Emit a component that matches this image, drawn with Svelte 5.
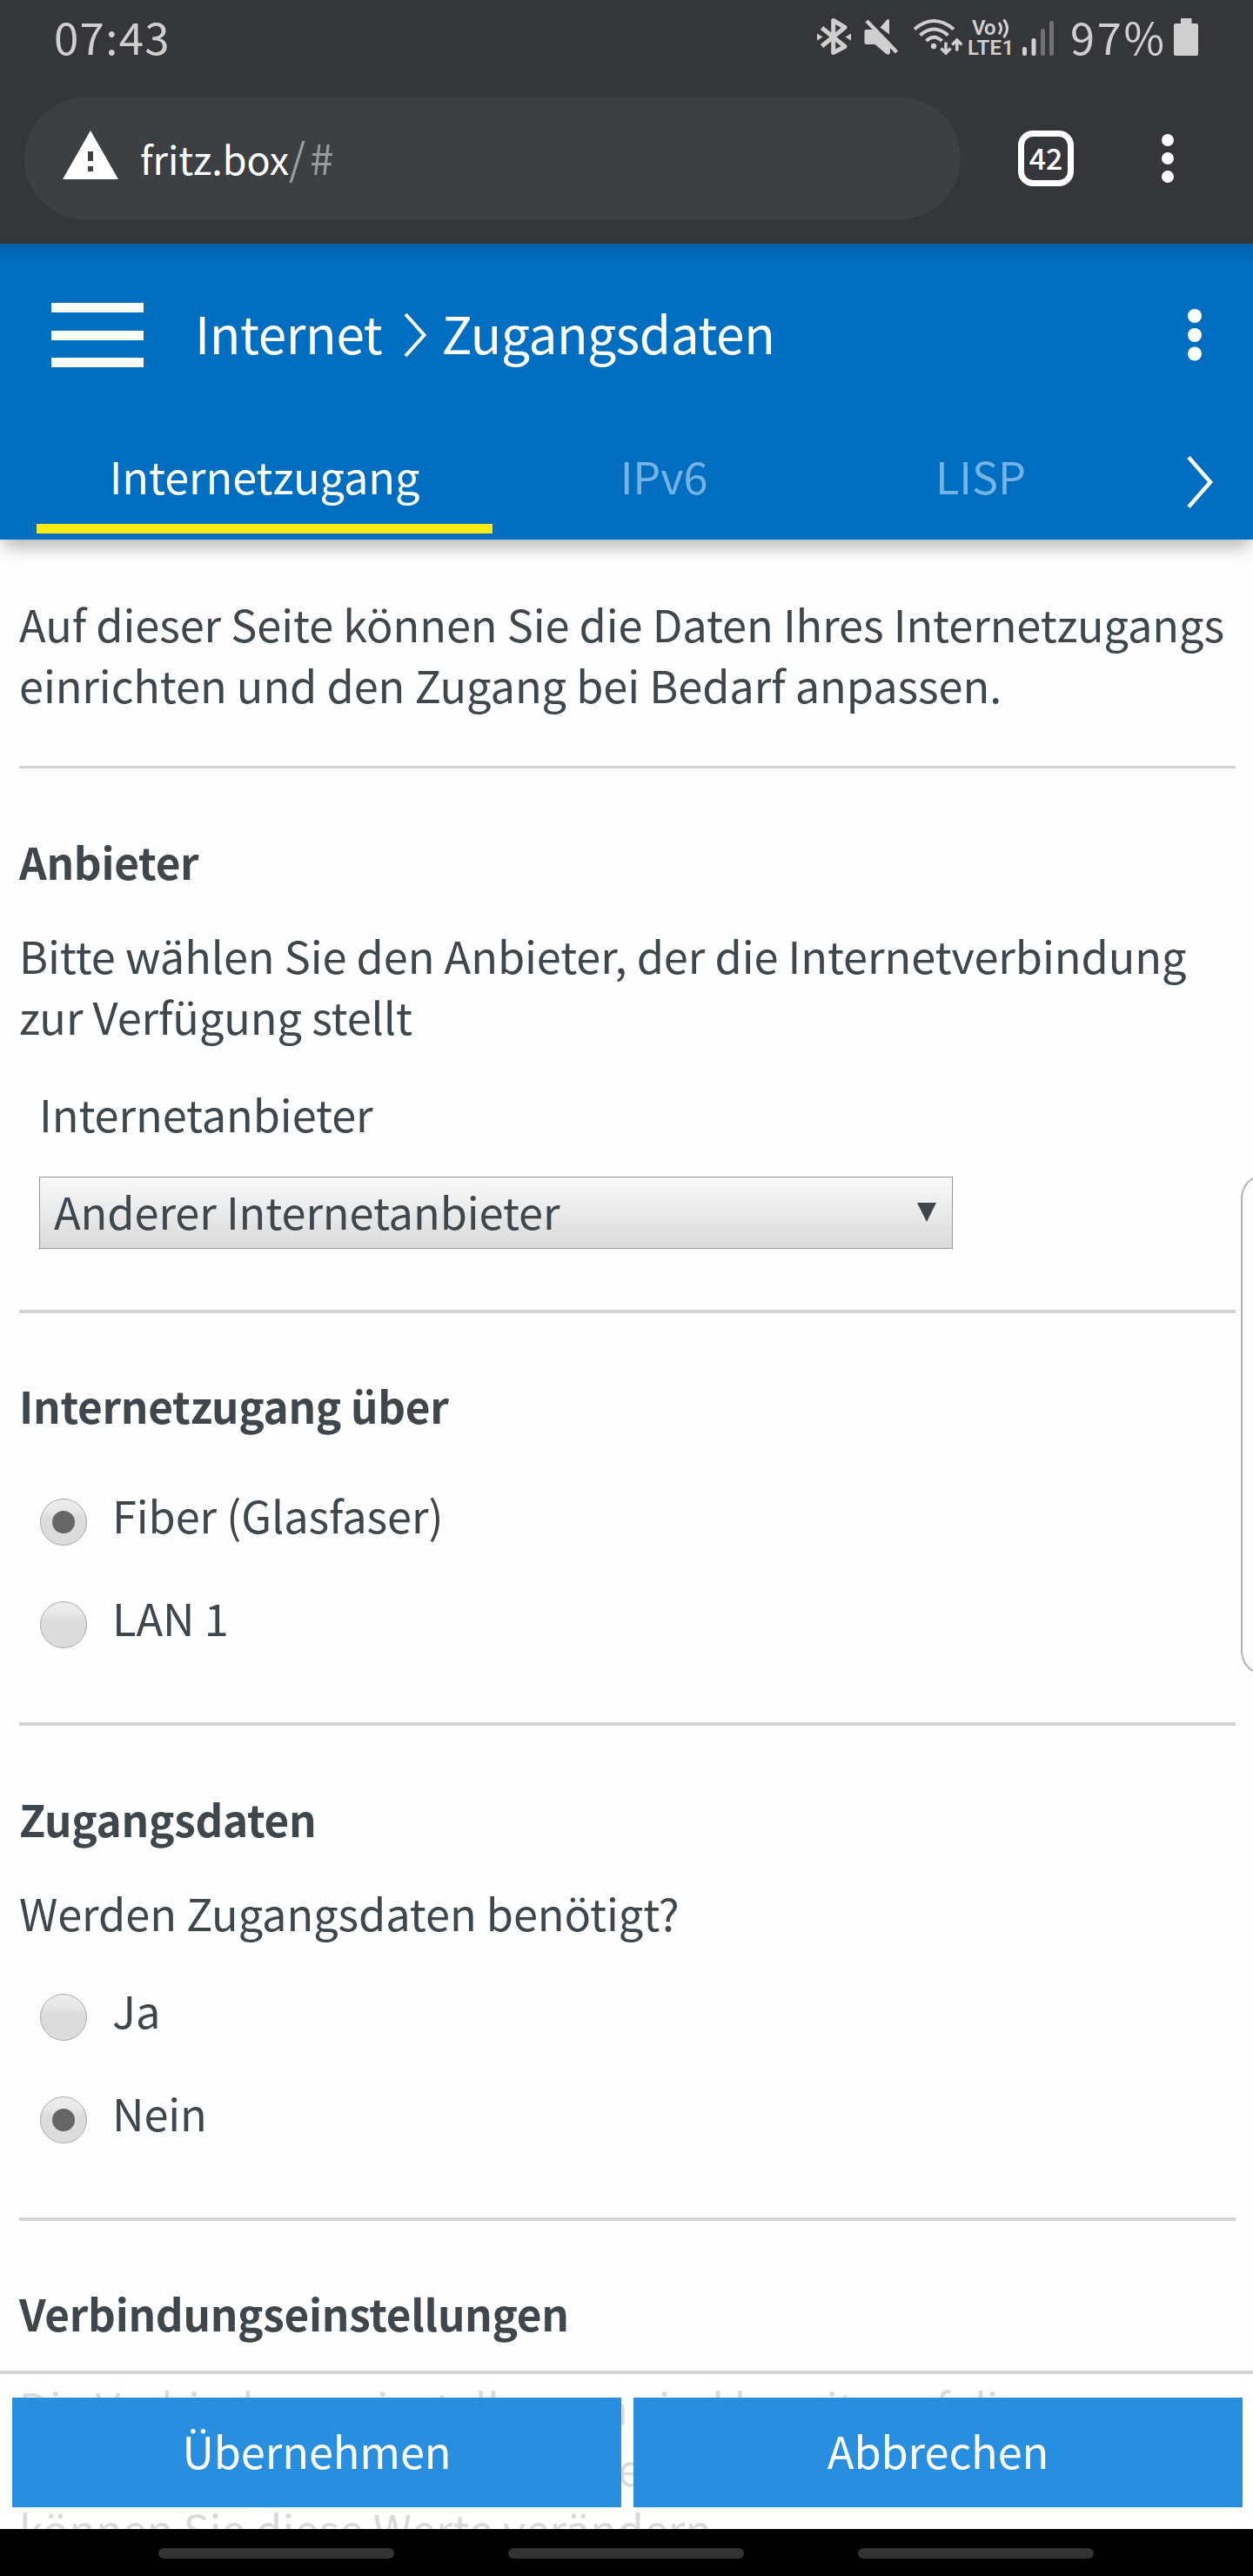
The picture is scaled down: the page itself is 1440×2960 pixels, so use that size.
<script lang="ts">
  let provider = $state('Anderer Internetanbieter')
  let access = $state('Fiber (Glasfaser)')
  let credentials = $state('Nein')
  let activeTab = $state('Internetzugang')

  const tabs = ['Internetzugang', 'IPv6', 'LISP']
  const accessTypes = ['Fiber (Glasfaser)', 'LAN 1']
  const answers = ['Ja', 'Nein']
</script>

{#snippet radio(label: string, checked: boolean, select: () => void)}
  <button class="radio" role="radio" aria-checked={checked} onclick={select}>
    <span class="circle" class:checked></span>
    <span>{label}</span>
  </button>
{/snippet}

<div class="screen">
  <div class="status-bar">
    <span class="time">07:43</span>
    <svg class="status-icons" viewBox="930 0 450 98" width="450" height="98">
      <path d="M944.500 32 L971 53.500 L957.700 60.500 V23.500 L971 31.500 L944.500 53" fill="none" stroke="#cfcfcf" stroke-width="5" stroke-linejoin="round" />
      <g fill="#cfcfcf">
        <path d="M939 38.500 L945.500 42.500 L939 46.500 Z M978 38.500 L971.500 42.500 L978 46.500 Z" />
        <path d="M993.500 36 Q993.500 34 995.500 34 H1003 L1023 54 V60.500 Q1022 64 1018.500 62 L1005.500 51 H996 Q993.500 51 993.500 48.500 Z" />
        <path d="M1011.500 31.500 L1019 23 Q1022 20.500 1022 24 V39.500 Z" />
      </g>
      <path d="M996 24 L1030.500 60" stroke="#cfcfcf" stroke-width="4.500" />
      <g fill="none" stroke="#cfcfcf" stroke-width="4">
        <path d="M1051 33.500 Q1073 14.500 1096 33.500" />
        <path d="M1057.500 40.500 Q1073 26.500 1089.500 40.500" />
        <path d="M1064.500 47 Q1073 38.500 1082.500 47" />
        <path d="M1087 48.500 V61 M1081.500 55.500 L1087 61 L1092.500 55.500" stroke-width="3.500" />
        <path d="M1099.800 58.500 V46 M1094.300 51.500 L1099.800 46 L1105.300 51.500" stroke-width="3.500" />
        <path d="M1148 26 Q1153 32.500 1148 39.500" stroke-width="3" />
        <path d="M1153.500 22.500 Q1161.500 32.500 1153.500 43" stroke-width="3" />
      </g>
      <circle cx="1073" cy="53" r="3.200" fill="#cfcfcf" />
      <text x="1117" y="39.500" class="net" textLength="27.500">Vo</text>
      <text x="1112" y="63" class="net" textLength="53">LTE1</text>
      <rect x="1175" y="54" width="5" height="10" rx="2" fill="#cfcfcf" />
      <rect x="1185.500" y="44" width="5" height="20" rx="2" fill="#cfcfcf" />
      <rect x="1196" y="33" width="5" height="31" rx="2" fill="#707174" />
      <rect x="1206" y="24" width="5" height="40" rx="2" fill="#707174" />
      <text x="1230" y="63" class="percent" textLength="108">97%</text>
      <path d="M1357 21 H1369.500 V27 H1375 Q1377 27 1377 29 V62 Q1377 64 1375 64 H1351 Q1349 64 1349 62 V29 Q1349 27 1351 27 H1357 Z" fill="#cfcfcf" />
    </svg>
  </div>

  <div class="toolbar">
    <div class="address">
      <svg width="64" height="56" viewBox="0 0 64 56">
        <path d="M32 0 L64 56 H0 Z" fill="#fff" />
        <path d="M29 24 h6 v11 h-6 Z M29 41 h6 v6 h-6 Z" fill="#3c4043" />
      </svg>
      <span class="url">fritz.box<span class="path">/#</span></span>
    </div>
    <div class="tab-count">42</div>
    <svg class="more" width="14" height="58" viewBox="0 0 14 58" fill="#fff">
      <circle cx="7" cy="8" r="7" />
      <circle cx="7" cy="29" r="7" />
      <circle cx="7" cy="50" r="7" />
    </svg>
  </div>

  <header>
    <div class="title-row">
      <div class="hamburger"><i></i><i></i><i></i></div>
      <div class="title">
        <span>Internet</span>
        <svg width="27" height="52" viewBox="0 0 27 52">
          <path d="M2 2 L23.500 26 L2 50" fill="none" stroke="#fff" stroke-width="4" />
        </svg>
        <span class="page">Zugangsdaten</span>
      </div>
      <svg class="menu" width="18" height="62" viewBox="0 0 18 62" fill="#fff">
        <circle cx="9" cy="9" r="8" />
        <circle cx="9" cy="31" r="8" />
        <circle cx="9" cy="52.500" r="8" />
      </svg>
    </div>
    <nav>
      {#each tabs as tab}
        <button class="tab" class:active={tab === activeTab} onclick={() => (activeTab = tab)}>{tab}</button>
      {/each}
      <svg class="next" width="30" height="60" viewBox="0 0 30 60">
        <path d="M2 1.500 L27 30 L2 58.500" fill="none" stroke="#fff" stroke-width="4.500" />
      </svg>
    </nav>
  </header>

  <main>
    <p>Auf dieser Seite können Sie die Daten Ihres Internetzugangs<br />einrichten und den Zugang bei Bedarf anpassen.</p>

    <section class="thin">
      <h2>Anbieter</h2>
      <p>Bitte wählen Sie den Anbieter, der die Internetverbindung<br />zur Verfügung stellt</p>
      <div class="field">
        <span>Internetanbieter</span>
        <div class="select">
          <span>{provider}</span>
          <svg width="22" height="22" viewBox="0 0 22 22"><path d="M0 0 H22 L11 22 Z" fill="#3f464c" /></svg>
        </div>
      </div>
    </section>

    <section>
      <h2>Internetzugang über</h2>
      <div class="radios wide" role="radiogroup">
        {#each accessTypes as type}
          {@render radio(type, type === access, () => (access = type))}
        {/each}
      </div>
    </section>

    <section class="credentials">
      <h2>Zugangsdaten</h2>
      <p>Werden Zugangsdaten benötigt?</p>
      <div class="radios" role="radiogroup">
        {#each answers as answer}
          {@render radio(answer, answer === credentials, () => (credentials = answer))}
        {/each}
      </div>
    </section>

    <section>
      <h2>Verbindungseinstellungen</h2>
      <p>Die Verbindungseinstellungen sind bereits auf die am<br />häufigsten verwendeten Werte eingestellt. Bei Bedarf<br />können Sie diese Werte verändern.</p>
    </section>

    <div class="side-handle"></div>
    <div class="actions">
      <button>Übernehmen</button>
      <button>Abbrechen</button>
    </div>
  </main>

  <div class="nav-bar"><i></i><i></i><i></i></div>
</div>

<style>
  :global(body) {
    margin: 0;
    background: #fefefe;
  }

  .screen {
    display: flex;
    flex-direction: column;
    width: 1440px;
    height: 2960px;
    overflow: hidden;
    font-family: 'Noto Sans CJK SC', 'Open Sans', sans-serif;
    font-size: 50.5px;
    line-height: 70px;
    color: #3f464c;
    letter-spacing: -0.1px;
    background: #fefefe;
  }

  button {
    padding: 0;
    font: inherit;
    color: inherit;
    letter-spacing: inherit;
    background: none;
    border: 0;
  }

  .status-bar {
    display: flex;
    flex: none;
    justify-content: space-between;
    height: 98px;
    padding: 0 60px 0 62px;
    color: #cfcfcf;
    background: #35363a;
  }

  .time {
    padding-top: 6px;
    font-size: 51px;
    letter-spacing: 1.3px;
  }

  .net {
    font: 600 24px Roboto, sans-serif;
    fill: #cfcfcf;
  }

  .percent {
    font-size: 50.5px;
    fill: #cfcfcf;
  }

  .toolbar {
    display: flex;
    flex: none;
    align-items: center;
    box-sizing: border-box;
    height: 182px;
    padding: 0 91px 14px 28px;
    background: #35363a;
  }

  .toolbar > * {
    box-sizing: border-box;
  }

  .address {
    display: flex;
    gap: 25px;
    align-items: center;
    width: 1076px;
    height: 140px;
    padding: 0 0 8px 44px;
    color: #fff;
    background: #3c4043;
    border-radius: 70px;
  }

  .url {
    padding-top: 5px;
    font-size: 45px;
  }

  .path {
    font-size: 49px;
    color: #9a9c9e;
    letter-spacing: 5px;
  }

  .tab-count {
    width: 64px;
    height: 64px;
    margin-left: 66px;
    font-size: 34px;
    font-weight: 500;
    line-height: 47px;
    color: #fff;
    text-align: center;
    border: 7px solid #fff;
    border-radius: 17px;
  }

  .more {
    margin-left: auto;
  }

  header {
    position: relative;
    z-index: 1;
    display: flex;
    flex: none;
    flex-direction: column;
    height: 340px;
    color: #fff;
    background: linear-gradient(#0561a8, #0069b8 12px, #006ec0 28px);
    box-shadow: 0 12px 20px -4px rgba(0, 0, 0, 0.3);
  }

  .title-row {
    display: flex;
    align-items: center;
    height: 210px;
    padding: 0 58px 0 59px;
  }

  .hamburger {
    display: flex;
    flex-direction: column;
    gap: 20.5px;
    width: 106px;
  }

  .hamburger i {
    height: 11px;
    background: #fff;
  }

  .title {
    display: flex;
    align-items: center;
    margin-left: 59px;
    font-size: 58.5px;
    letter-spacing: -0.4px;
  }

  .title span {
    padding-bottom: 6px;
  }

  .title svg {
    margin-left: 25px;
  }

  .page {
    margin-left: 16px;
  }

  .menu {
    margin-left: auto;
  }

  nav {
    display: flex;
    height: 130px;
    padding-left: 42px;
  }

  .tab {
    box-sizing: border-box;
    width: 394px;
    height: 123px;
    padding-bottom: 11px;
    color: #74b3e4;
  }

  .tab:nth-child(3) {
    width: 334px;
  }

  .tab.active {
    width: 524px;
    padding-bottom: 0;
    color: #fff;
    border-bottom: 11px solid #f7ec13;
  }

  .next {
    margin: 34px 0 0 70px;
  }

  main {
    position: relative;
    flex: 1;
    padding: 61px 20px 0 22px;
    overflow: hidden;
  }

  p,
  h2 {
    margin: 0;
    white-space: nowrap;
  }

  h2 {
    padding-top: 1px;
    font-size: 49.5px;
    font-weight: 600;
    line-height: 70px;
    letter-spacing: -0.3px;
  }

  section {
    padding: 70px 0 86px;
    border-top: 4px solid #d3d3d3;
  }

  section.thin {
    padding: 71px 0 70px;
    margin-top: 59px;
    border-width: 3px;
  }

  section.credentials {
    padding-top: 71px;
  }

  h2 + p {
    margin-top: 37px;
  }

  .field {
    padding: 42px 0 0 23px;
  }

  .select {
    display: flex;
    align-items: center;
    justify-content: space-between;
    box-sizing: border-box;
    width: 1050px;
    height: 83px;
    padding: 0 18px 5px 16px;
    margin-top: 38px;
    background: linear-gradient(#f9f9f9, #dadada);
    border: 1px solid #999;
  }

  .select svg {
    margin-top: 3px;
  }

  .radios {
    display: flex;
    flex-direction: column;
    gap: 48px;
    padding: 42px 0 0 24px;
  }

  .radios.wide {
    padding-top: 55px;
  }

  .radio {
    display: flex;
    gap: 29px;
    height: 70px;
    text-align: left;
  }

  .circle {
    display: flex;
    align-items: center;
    justify-content: center;
    box-sizing: border-box;
    width: 54px;
    height: 54px;
    margin-top: 17px;
    background: linear-gradient(#ededed, #e8e8e8 25%, #dcdcdc 42%);
    border: 1px solid #aaa;
    border-radius: 50%;
  }

  .circle.checked::after {
    width: 26px;
    height: 26px;
    content: '';
    background: #666;
    border-radius: 50%;
  }

  .side-handle {
    position: absolute;
    top: 732px;
    left: 1426px;
    width: 40px;
    height: 566px;
    background: #fcfcfc;
    border: 2px solid #b2b2b2;
    border-radius: 20px / 26px;
  }

  /* translucent bar fixed above the system navigation */
  .actions {
    position: absolute;
    right: 0;
    bottom: 0;
    left: 0;
    display: flex;
    gap: 14px;
    box-sizing: border-box;
    height: 182px;
    padding: 27px 12px 0 14px;
    background: rgba(255, 255, 255, 0.8);
    border-top: 4px solid #d3d3d3;
  }

  .actions button {
    flex: 1;
    height: 126px;
    padding-bottom: 7px;
    color: #fff;
    background: #278ee0;
  }

  .nav-bar {
    display: flex;
    flex: none;
    gap: 131px;
    box-sizing: border-box;
    height: 54px;
    padding: 22px 0 0 182px;
    background: #000;
  }

  .nav-bar i {
    width: 271px;
    height: 12px;
    background: #333;
    border-radius: 6px;
  }
</style>
